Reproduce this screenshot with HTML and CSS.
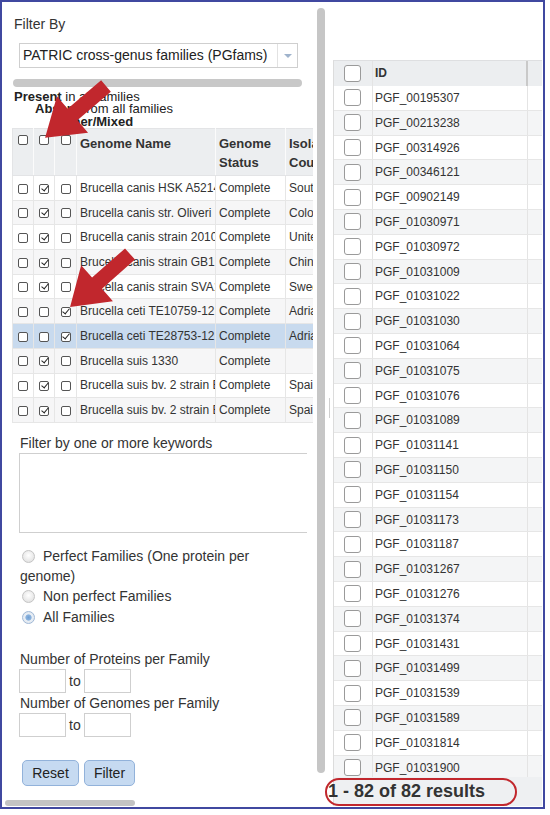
FILE: index.html
```html
<!DOCTYPE html>
<html>
<head>
<meta charset="utf-8">
<link rel="stylesheet" href="styles.css">
</head>
<body>
<div class="frame">
  <div class="left">
    <div class="left-main">
      <div class="pane">
        <div class="title">Filter By</div>
        <div class="select">
          <span class="select-text">PATRIC cross-genus families (PGfams)</span>
          <span class="select-btn"><span class="caret"></span></span>
        </div>
        <div class="hbar"></div>
        <div class="legend">
          <div class="l1"><b>Present</b> in all families</div>
          <div class="l2"><b>Absent</b> from all families</div>
          <div class="l3"><b>Other/Mixed</b></div>
        </div>
        <table class="gtable">
          <colgroup>
            <col class="w-cb1"><col class="w-cb2"><col class="w-cb3"><col class="w-name"><col class="w-status"><col class="w-country">
          </colgroup>
          <thead>
            <tr>
              <th class="c"><span class="cb"></span></th>
              <th class="c"><span class="cb"></span></th>
              <th class="c"><span class="cb"></span></th>
              <th>Genome Name</th>
              <th>Genome<br>Status</th>
              <th>Isolation<br>Country</th>
            </tr>
          </thead>
          <tbody>
            <tr><td class="c"><span class="cb"></span></td><td class="c"><span class="cb on"></span></td><td class="c"><span class="cb"></span></td><td>Brucella canis HSK A52141</td><td>Complete</td><td>South Korea</td></tr>
            <tr><td class="c"><span class="cb"></span></td><td class="c"><span class="cb on"></span></td><td class="c"><span class="cb"></span></td><td>Brucella canis str. Oliveri</td><td>Complete</td><td>Colombia</td></tr>
            <tr><td class="c"><span class="cb"></span></td><td class="c"><span class="cb on"></span></td><td class="c"><span class="cb"></span></td><td>Brucella canis strain 2010009751</td><td>Complete</td><td>United States</td></tr>
            <tr><td class="c"><span class="cb"></span></td><td class="c"><span class="cb on"></span></td><td class="c"><span class="cb"></span></td><td>Brucella canis strain GB1</td><td>Complete</td><td>China</td></tr>
            <tr><td class="c"><span class="cb"></span></td><td class="c"><span class="cb on"></span></td><td class="c"><span class="cb"></span></td><td>Brucella canis strain SVA13</td><td>Complete</td><td>Sweden</td></tr>
            <tr><td class="c"><span class="cb"></span></td><td class="c"><span class="cb"></span></td><td class="c"><span class="cb on"></span></td><td>Brucella ceti TE10759-12</td><td>Complete</td><td>Adriatic Sea</td></tr>
            <tr class="sel"><td class="c"><span class="cb"></span></td><td class="c"><span class="cb"></span></td><td class="c"><span class="cb on"></span></td><td>Brucella ceti TE28753-12</td><td>Complete</td><td>Adriatic Sea</td></tr>
            <tr><td class="c"><span class="cb"></span></td><td class="c"><span class="cb on"></span></td><td class="c"><span class="cb"></span></td><td>Brucella suis 1330</td><td>Complete</td><td></td></tr>
            <tr><td class="c"><span class="cb"></span></td><td class="c"><span class="cb on"></span></td><td class="c"><span class="cb"></span></td><td>Brucella suis bv. 2 strain Bs143CITA</td><td>Complete</td><td>Spain</td></tr>
            <tr><td class="c"><span class="cb"></span></td><td class="c"><span class="cb on"></span></td><td class="c"><span class="cb"></span></td><td>Brucella suis bv. 2 strain Bs364CITA</td><td>Complete</td><td>Spain</td></tr>
          </tbody>
        </table>
        <div class="kw-label">Filter by one or more keywords</div>
        <div class="textarea"></div>
        <div class="radios">
          <div class="opt"><span class="radio"></span>Perfect Families (One protein per genome)</div>
          <div class="opt"><span class="radio"></span>Non perfect Families</div>
          <div class="opt"><span class="radio on"></span>All Families</div>
        </div>
        <div class="num-label first">Number of Proteins per Family</div>
        <div class="range"><span class="inp"></span><span class="to">to</span><span class="inp"></span></div>
        <div class="num-label">Number of Genomes per Family</div>
        <div class="range"><span class="inp"></span><span class="to">to</span><span class="inp"></span></div>
        <div class="btns"><button class="btn reset">Reset</button><button class="btn filter">Filter</button></div>
      </div>
      <div class="vscroll"><div class="vthumb"></div></div>
    </div>
    <div class="hscroll"><div class="hthumb"></div></div>
  </div>
  <div class="splitter"><div class="handle"></div></div>
  <div class="right">
    <div class="rtop"></div>
    <div class="rhead">
      <div class="rc-cb"><span class="rcb"></span></div>
      <div class="rc-id hd">ID</div>
      <div class="rc-x"></div>
    </div>
    <div class="rbody">
      <div class="rrow"><div class="rc-cb"><span class="rcb"></span></div><div class="rc-id">PGF_00195307</div><div class="rc-x"></div></div>
      <div class="rrow"><div class="rc-cb"><span class="rcb"></span></div><div class="rc-id">PGF_00213238</div><div class="rc-x"></div></div>
      <div class="rrow"><div class="rc-cb"><span class="rcb"></span></div><div class="rc-id">PGF_00314926</div><div class="rc-x"></div></div>
      <div class="rrow"><div class="rc-cb"><span class="rcb"></span></div><div class="rc-id">PGF_00346121</div><div class="rc-x"></div></div>
      <div class="rrow"><div class="rc-cb"><span class="rcb"></span></div><div class="rc-id">PGF_00902149</div><div class="rc-x"></div></div>
      <div class="rrow"><div class="rc-cb"><span class="rcb"></span></div><div class="rc-id">PGF_01030971</div><div class="rc-x"></div></div>
      <div class="rrow"><div class="rc-cb"><span class="rcb"></span></div><div class="rc-id">PGF_01030972</div><div class="rc-x"></div></div>
      <div class="rrow"><div class="rc-cb"><span class="rcb"></span></div><div class="rc-id">PGF_01031009</div><div class="rc-x"></div></div>
      <div class="rrow"><div class="rc-cb"><span class="rcb"></span></div><div class="rc-id">PGF_01031022</div><div class="rc-x"></div></div>
      <div class="rrow"><div class="rc-cb"><span class="rcb"></span></div><div class="rc-id">PGF_01031030</div><div class="rc-x"></div></div>
      <div class="rrow"><div class="rc-cb"><span class="rcb"></span></div><div class="rc-id">PGF_01031064</div><div class="rc-x"></div></div>
      <div class="rrow"><div class="rc-cb"><span class="rcb"></span></div><div class="rc-id">PGF_01031075</div><div class="rc-x"></div></div>
      <div class="rrow"><div class="rc-cb"><span class="rcb"></span></div><div class="rc-id">PGF_01031076</div><div class="rc-x"></div></div>
      <div class="rrow"><div class="rc-cb"><span class="rcb"></span></div><div class="rc-id">PGF_01031089</div><div class="rc-x"></div></div>
      <div class="rrow"><div class="rc-cb"><span class="rcb"></span></div><div class="rc-id">PGF_01031141</div><div class="rc-x"></div></div>
      <div class="rrow"><div class="rc-cb"><span class="rcb"></span></div><div class="rc-id">PGF_01031150</div><div class="rc-x"></div></div>
      <div class="rrow"><div class="rc-cb"><span class="rcb"></span></div><div class="rc-id">PGF_01031154</div><div class="rc-x"></div></div>
      <div class="rrow"><div class="rc-cb"><span class="rcb"></span></div><div class="rc-id">PGF_01031173</div><div class="rc-x"></div></div>
      <div class="rrow"><div class="rc-cb"><span class="rcb"></span></div><div class="rc-id">PGF_01031187</div><div class="rc-x"></div></div>
      <div class="rrow"><div class="rc-cb"><span class="rcb"></span></div><div class="rc-id">PGF_01031267</div><div class="rc-x"></div></div>
      <div class="rrow"><div class="rc-cb"><span class="rcb"></span></div><div class="rc-id">PGF_01031276</div><div class="rc-x"></div></div>
      <div class="rrow"><div class="rc-cb"><span class="rcb"></span></div><div class="rc-id">PGF_01031374</div><div class="rc-x"></div></div>
      <div class="rrow"><div class="rc-cb"><span class="rcb"></span></div><div class="rc-id">PGF_01031431</div><div class="rc-x"></div></div>
      <div class="rrow"><div class="rc-cb"><span class="rcb"></span></div><div class="rc-id">PGF_01031499</div><div class="rc-x"></div></div>
      <div class="rrow"><div class="rc-cb"><span class="rcb"></span></div><div class="rc-id">PGF_01031539</div><div class="rc-x"></div></div>
      <div class="rrow"><div class="rc-cb"><span class="rcb"></span></div><div class="rc-id">PGF_01031589</div><div class="rc-x"></div></div>
      <div class="rrow"><div class="rc-cb"><span class="rcb"></span></div><div class="rc-id">PGF_01031814</div><div class="rc-x"></div></div>
      <div class="rrow"><div class="rc-cb"><span class="rcb"></span></div><div class="rc-id">PGF_01031900</div><div class="rc-x"></div></div>
    </div>
    <div class="rfoot"><span class="count">1 - 82 of 82 results</span></div>
  </div>
</div>
<svg class="arrows" width="550" height="815" viewBox="0 0 550 815">
  <polygon fill="#c1272d" transform="translate(106 86) rotate(139.6)" points="0,-7.5 44,-7.5 44,-24 80,0 44,24 44,7.5 0,7.5"/>
  <polygon fill="#c1272d" transform="translate(130 254) rotate(138.5)" points="0,-7.5 44,-7.5 44,-24 80,0 44,24 44,7.5 0,7.5"/>
</svg>
</body>
</html>
```

FILE: styles.css
```css
* { box-sizing: border-box; }

body {
  margin: 0;
  width: 550px;
  height: 815px;
  position: relative;
  overflow: hidden;
  background: #fff;
  color: #333;
  font-family: "Liberation Sans", Arial, sans-serif;
}

.frame {
  width: 545px;
  height: 809px;
  border: 2px solid #4048a0;
  display: flex;
}

/* ---------- left side ---------- */
.left {
  width: 324px;
  display: flex;
  flex-direction: column;
}
.left-main {
  height: 795px;
  display: flex;
}
.pane {
  width: 311px;
  overflow: hidden;
}
.vscroll {
  width: 13px;
  padding: 6px 0 0 4px;
}
.vthumb {
  width: 8px;
  height: 765px;
  background: #c6c6c6;
  border-radius: 4px;
}
.hscroll {
  height: 9px;
  padding: 3px 0 0 3px;
}
.hthumb {
  width: 130px;
  height: 6px;
  background: #c3c3c3;
  border-radius: 3px;
}

.title {
  margin-top: 14px;
  padding-left: 12px;
  font-size: 14px;
  line-height: 16px;
}
.select {
  margin: 11px 0 0 17px;
  width: 279px;
  height: 25px;
  border: 1px solid #cfcfcf;
  display: flex;
  align-items: stretch;
  font-size: 14px;
  color: #222;
}
.select-text {
  flex: 1;
  padding-left: 3px;
  line-height: 23px;
  white-space: nowrap;
}
.select-btn {
  width: 20px;
  border-left: 1px solid #e2e2e2;
  display: flex;
  align-items: center;
  justify-content: center;
}
.caret {
  width: 0;
  height: 0;
  border-top: 4px solid #9fb3cc;
  border-left: 4px solid transparent;
  border-right: 4px solid transparent;
}
.hbar {
  margin: 11px 0 0 11px;
  width: 289px;
  height: 8px;
  border-radius: 4px;
  background: #c8c8c8;
}
.legend {
  margin-top: 3.5px;
  font-size: 13px;
  line-height: 12.5px;
  color: #222;
  white-space: nowrap;
}
.l1 { padding-left: 12px; }
.l2 { padding-left: 33px; }
.l3 { padding-left: 56px; }

.gtable {
  margin-left: 10px;
  width: 338px;
  table-layout: fixed;
  border-collapse: collapse;
  font-size: 12px;
  color: #333;
}
.w-cb1 { width: 21px; }
.w-cb2 { width: 21px; }
.w-cb3 { width: 22px; }
.w-name { width: 139px; }
.w-status { width: 70px; }
.w-country { width: 65px; }

.gtable thead tr { height: 47px; }
.gtable th {
  background: #eceef0;
  border: 1px solid #e3e4e6;
  border-right: 1px solid #fbfbfb;
  vertical-align: top;
  text-align: left;
  font-size: 13px;
  font-weight: bold;
  line-height: 19px;
  padding: 5px 0 0 3px;
  white-space: nowrap;
  overflow: hidden;
  color: #333;
}
.gtable th.c {
  text-align: center;
  padding: 5px 0 0 0;
  line-height: 10px;
}
.gtable tbody tr { height: 24.7px; }
.gtable tbody tr:nth-child(even) { background: #f6f6f7; }
.gtable tbody tr.sel { background: #c8daee; }
.gtable td {
  border: 1px solid #e6e6e6;
  padding: 0 0 0 3px;
  white-space: nowrap;
  overflow: hidden;
  vertical-align: middle;
}
.gtable td.c {
  text-align: center;
  padding: 0;
}

.cb {
  display: inline-block;
  position: relative;
  width: 10px;
  height: 10px;
  border: 1px solid #555;
  border-radius: 2px;
  background: #fff;
  vertical-align: middle;
}
.cb.on::after {
  content: "";
  position: absolute;
  left: 2.5px;
  top: -1px;
  width: 3px;
  height: 6px;
  border-right: 1.5px solid #222;
  border-bottom: 1.5px solid #222;
  transform: rotate(40deg);
}

.kw-label {
  margin-top: 12px;
  padding-left: 18px;
  font-size: 14px;
  line-height: 16px;
}
.textarea {
  margin: 2px 0 0 17px;
  width: 288px;
  height: 80px;
  border: 1px solid #cfcfcf;
  border-right: none;
}
.radios {
  margin-top: 13px;
  padding-left: 18px;
  width: 273px;
  font-size: 14px;
  line-height: 20.3px;
}
.radio {
  display: inline-block;
  width: 13px;
  height: 13px;
  margin: 0 8px 0 2px;
  border: 1px solid #c4c4c4;
  border-radius: 50%;
  background: radial-gradient(circle at 50% 40%, #ffffff 0%, #e6e6e6 70%, #d6d6d6 100%);
  vertical-align: -2px;
  position: relative;
}
.radio.on {
  border-color: #9fb8d6;
  background: radial-gradient(circle, #6f9fd3 0%, #8cb3de 35%, #e8eef5 45%, #dfe4ea 100%);
}

.num-label {
  margin-top: 2px;
  padding-left: 18px;
  font-size: 14px;
  line-height: 16px;
}
.num-label.first { margin-top: 24px; }
.range {
  margin-top: 2px;
  padding-left: 17px;
  display: flex;
  align-items: center;
  height: 24px;
  font-size: 14px;
}
.inp {
  width: 47px;
  height: 24px;
  border: 1px solid #cfcfcf;
}
.to {
  margin: 0 3px;
}
.btns {
  margin: 23px 0 0 20px;
  display: flex;
  gap: 5px;
}
.btn {
  height: 26px;
  padding: 0;
  background: #c6daf1;
  border: 1px solid #92b2da;
  border-radius: 5px;
  font-family: "Liberation Sans", Arial, sans-serif;
  font-size: 14px;
  color: #222;
}
.btn.reset { width: 57px; }
.btn.filter { width: 51px; }

/* ---------- splitter ---------- */
.splitter {
  width: 7px;
  padding-top: 396px;
}
.handle {
  margin-left: 3px;
  width: 1px;
  height: 20px;
  background: #cfcfcf;
}

/* ---------- right side ---------- */
.right {
  width: 209px;
  display: flex;
  flex-direction: column;
}
.rtop { height: 58px; }
.rhead {
  height: 26px;
  display: grid;
  grid-template-columns: 39px 155px 14px;
  background: #eceef0;
  border-top: 1px solid #dedfe1;
  border-left: 1px solid #dcdcdc;
}
.rhead .rc-id {
  font-weight: bold;
  border-right: 2px solid #c9c9c9;
}
.rbody {
  height: 691px;
  overflow: hidden;
  border-left: 1px solid #dcdcdc;
}
.rrow {
  height: 24.8px;
  display: grid;
  grid-template-columns: 39px 155px 14px;
  border-bottom: 1px solid #e6e6e6;
}
.rrow:nth-child(even) { background: #f4f5f6; }
.rc-cb {
  border-right: 1px solid #e4e4e4;
  padding-left: 10px;
  display: flex;
  align-items: center;
}
.rc-id {
  border-right: 1px solid #e4e4e4;
  padding-left: 2px;
  font-size: 12px;
  line-height: 24px;
  color: #333;
  white-space: nowrap;
  overflow: hidden;
}
.rhead .rc-id { line-height: 25px; }
.rcb {
  width: 17px;
  height: 17px;
  border: 1px solid #9a9a9a;
  border-radius: 3px;
  background: #fff;
}
.rfoot {
  height: 29px;
  background: #eef0f2;
  border-left: 1px solid #dcdcdc;
  padding-top: 1px;
}
.count {
  display: inline-block;
  margin-left: -9px;
  width: 192px;
  height: 28px;
  border: 2px solid #c1272d;
  border-radius: 14px;
  padding-left: 1px;
  font-size: 18px;
  font-weight: bold;
  line-height: 23px;
  color: #333;
  white-space: nowrap;
}

.arrows {
  position: absolute;
  left: 0;
  top: 0;
  pointer-events: none;
}
```
